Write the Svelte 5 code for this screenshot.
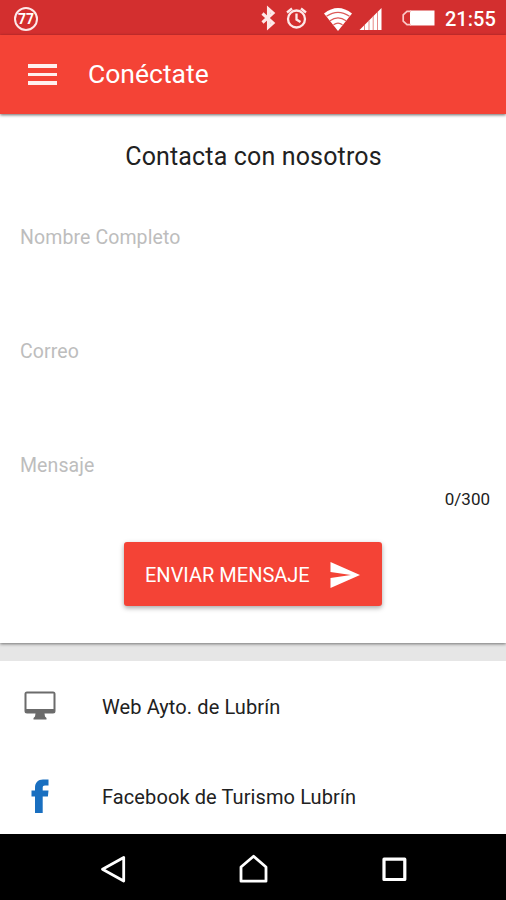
<script>
  const MAX_LENGTH = 300

  let name = ''
  let email = ''
  let message = ''

  const links = [
    { icon: 'monitor', label: 'Web Ayto. de Lubrín' },
    { icon: 'facebook', label: 'Facebook de Turismo Lubrín' },
  ]

  const sendMessage = () => {
    name = ''
    email = ''
    message = ''
  }
</script>

<main>
  <div class="status-bar">
    <div class="badge">77</div>
    <svg class="status-icons" width="180" height="35" viewBox="260 0 180 35">
      <!-- bluetooth -->
      <path d="M262.500 13.500l10.500 9.500-4.500 4V9l4.500 4-10.500 9.500" fill="none" stroke="#fde8e8" stroke-width="3.100" />
      <!-- alarm -->
      <g fill="none" stroke="#fde8e8" stroke-width="2.300">
        <circle cx="296.500" cy="19" r="8.500" />
        <path d="M296.500 13.500v6l4 2.500M287 12.500l5-4M306 12.500l-5-4" />
      </g>
      <!-- wifi -->
      <path d="M324 13.500Q338 2.500 352 13.500L338 31z" fill="#fff" />
      <path d="M326.500 16.300q11.500-8 23 0M330 20.800q8-6 16 0M333.500 24.800q4.500-3.500 9 0" fill="none" stroke="#dd5a58" stroke-width="1.200" />
      <!-- signal -->
      <path d="M359.500 30L381.500 8v22z" fill="#fff" />
      <path d="M364.500 25v5M369 20.500v9.500M373.200 16v14M377.500 12v18" stroke="#e27a78" stroke-width=".900" />
      <!-- battery -->
      <path d="M410 10.500h24.500v15H410z" fill="#fff" />
      <path d="M411 11.300h-4l-3.800 3.500v6.400l3.800 3.500h4" fill="none" stroke="#fbc9c7" stroke-width="1.700" />
    </svg>
    <span class="clock">21:55</span>
  </div>

  <header class="toolbar">
    <button class="menu-btn" aria-label="Menú">
      <span></span>
      <span></span>
      <span></span>
    </button>
    <h1>Conéctate</h1>
  </header>

  <section class="contact">
    <h2>Contacta con nosotros</h2>

    <label class="field">
      <span class:hidden={name}>Nombre Completo</span>
      <input type="text" bind:value={name}>
    </label>
    <label class="field">
      <span class:hidden={email}>Correo</span>
      <input type="email" bind:value={email}>
    </label>
    <label class="field message">
      <span class:hidden={message}>Mensaje</span>
      <input type="text" bind:value={message} maxlength={MAX_LENGTH}>
    </label>
    <p class="counter">{message.length}/{MAX_LENGTH}</p>

    <button class="send-btn" on:click={sendMessage}>
      <span>ENVIAR MENSAJE</span>
      <svg width="30" height="26" viewBox="0 0 30 26">
        <path d="M.500 26L30 13 .500 0v10L21 13 .500 16z" fill="#fff" />
      </svg>
    </button>
  </section>

  <ul class="links">
    {#each links as link}
      <li>
        <span class="link-icon">
          {#if link.icon === 'monitor'}
            <svg width="32" height="30" viewBox="0 0 32 30">
              <path d="M3 .500h26a2.500 2.500 0 0 1 2.500 2.500v17a2.500 2.500 0 0 1-2.500 2.500h-8.500l.500 3 1.500 1.500v1.500h-13V27l1.500-1.500.500-3H3A2.500 2.500 0 0 1 .500 20V3A2.500 2.500 0 0 1 3 .500zM2.500 2.500v15.500h27V2.500z" fill="#6b6b6b" fill-rule="evenodd" />
            </svg>
          {:else}
            <svg width="18" height="34" viewBox="0 0 18 34">
              <path d="M4 34V17.500H.500v-6H4V9c0-5.500 3-8.500 8-8.500h5.500v6H14c-1.600 0-2.300.700-2.300 2.200v2.800h5.800l-.600 6h-5.200V34z" fill="#196fc0" />
            </svg>
          {/if}
        </span>
        <span class="link-label">{link.label}</span>
      </li>
    {/each}
  </ul>

  <nav class="nav-bar">
    <svg width="506" height="66" viewBox="0 834 506 66" fill="none" stroke="#fff" stroke-width="2.800" stroke-linejoin="round">
      <path d="M123.700 857.500v23.500L102.500 869.200z" />
      <path d="M241 867l12.600-10.800L266 867v14.200h-25z" />
      <path d="M384 859.200h20.800v20.300H384z" stroke-width="3.200" />
    </svg>
  </nav>
</main>

<style>
  :global(body) {
    margin: 0;
  }
  main {
    display: flex;
    flex-direction: column;
    width: 506px;
    height: 900px;
    overflow: hidden;
    background: #e6e6e6;
    color: #212121;
    font-family: Roboto, sans-serif;
  }
  h1, h2, p, ul {
    margin: 0;
    padding: 0;
    font-weight: 400;
  }
  button {
    border: 0;
    font-family: inherit;
    cursor: pointer;
  }

  .status-bar {
    flex: none;
    display: flex;
    align-items: center;
    height: 35px;
    padding: 0 11px 0 14px;
    background: #d32f2f;
    color: #fff;
  }
  .badge {
    box-sizing: border-box;
    width: 24px;
    height: 24px;
    margin-top: 2px;
    border: 2px solid #fde8e8;
    border-radius: 50%;
    font-size: 14px;
    font-weight: 700;
    line-height: 20px;
    text-align: center;
  }
  .status-icons {
    margin-left: auto;
  }
  .clock {
    width: 50px;
    margin-left: 5px;
    padding-top: 3px;
    font-size: 20px;
    font-weight: 500;
    white-space: nowrap;
  }

  .toolbar {
    flex: none;
    z-index: 1;
    display: flex;
    align-items: center;
    height: 79px;
    padding-left: 28px;
    background: #f44336;
    box-shadow: 0 1px 3px rgba(0, 0, 0, .6);
    color: #fff;
  }
  .menu-btn {
    display: flex;
    flex-direction: column;
    gap: 5px;
    width: 29px;
    margin-right: 31px;
    padding: 0;
    background: none;
  }
  .menu-btn span {
    height: 3.500px;
    background: #fff0ee;
  }
  h1 {
    padding-bottom: 2px;
    font-size: 26.500px;
    line-height: 30px;
  }

  .contact {
    flex: none;
    display: flex;
    flex-direction: column;
    box-sizing: border-box;
    height: 529px;
    padding: 28px 16px 0 20px;
    background: #fff;
    box-shadow: 0 1px 3px rgba(0, 0, 0, .5);
  }
  h2 {
    margin: 0 0 50px -3px;
    font-size: 25px;
    line-height: 30px;
    text-align: center;
    letter-spacing: .15px;
  }
  .field {
    display: grid;
    height: 114px;
    color: #bdbdbd;
    font-size: 19.500px;
    line-height: 32px;
    letter-spacing: .1px;
  }
  .field span, .field input {
    grid-area: 1 / 1;
    height: 32px;
  }
  .field input {
    padding: 0;
    border: 0;
    outline: 0;
    background: none;
    color: #212121;
    font: inherit;
  }
  .hidden {
    visibility: hidden;
  }
  .message {
    height: 39px;
  }
  .counter {
    font-size: 17px;
    line-height: 20px;
    text-align: right;
  }
  .send-btn {
    display: flex;
    align-items: center;
    justify-content: space-between;
    align-self: center;
    width: 258px;
    height: 64px;
    margin: 33px 0 0 -4px;
    padding: 1px 22px 0 21px;
    border-radius: 3px;
    background: #f44336;
    box-shadow: 0 2px 5px rgba(0, 0, 0, .35);
    color: #fff;
    font-size: 20px;
  }

  .links {
    flex: none;
    height: 173px;
    margin-top: 18px;
    overflow: hidden;
    background: #fff;
    list-style: none;
  }
  .links li {
    display: flex;
    align-items: center;
    height: 90px;
  }
  .link-icon {
    display: flex;
    justify-content: center;
    width: 80px;
    margin-right: 22px;
  }
  .link-label {
    padding-top: 2px;
    font-size: 20px;
    letter-spacing: .1px;
  }

  .nav-bar {
    flex: none;
    height: 66px;
    background: #000;
  }
</style>
